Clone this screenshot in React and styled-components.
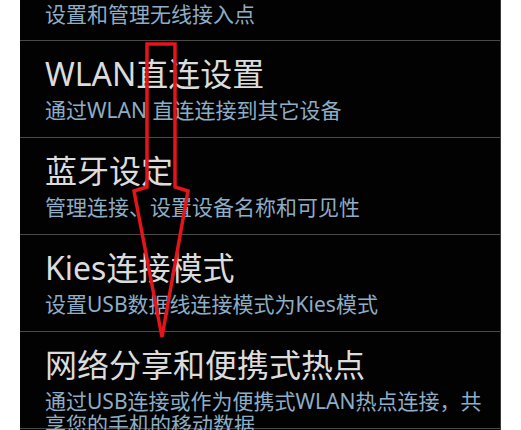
import React from "react"
import styled, { createGlobalStyle } from "styled-components"

const GlobalStyle = createGlobalStyle`
  html, body {
    margin: 0;
    padding: 0;
    background: #ffffff;
  }
  body {
    font-family: "Noto Sans", "Noto Sans CJK SC", sans-serif;
  }
`

const items = [
  { title: null, summary: "设置和管理无线接入点" },
  { title: "WLAN直连设置", summary: "通过WLAN 直连连接到其它设备" },
  { title: "蓝牙设定", summary: "管理连接、设置设备名称和可见性" },
  { title: "Kies连接模式", summary: "设置USB数据线连接模式为Kies模式" },
  {
    title: "网络分享和便携式热点",
    summary: "通过USB连接或作为便携式WLAN热点连接，共享您的手机的移动数据",
  },
]

// each character is its own box so mixed latin/CJK fonts don't grow the line
const SettingItem = ({ title, summary, cut }) => {
  return (
    <ItemWrapper $cut={cut}>
      {title && <ItemTitle>{title}</ItemTitle>}
      <ItemSummary>
        {summary.split("").map((ch, i) => (
          <Glyph key={i}>{ch}</Glyph>
        ))}
      </ItemSummary>
    </ItemWrapper>
  )
}

const DownArrow = () => (
  <ArrowLayer viewBox="0 0 521 430" width="521" height="430">
    <polygon
      points="147,44 175,44 175,187 188,191 162,337 134,191 147,187"
      fill="none"
      stroke="#e3141b"
      strokeWidth="3.5"
      strokeLinejoin="miter"
    />
  </ArrowLayer>
)

const App = () => {
  return (
    <Page>
      <GlobalStyle />
      <Panel>
        {items.map((item, i) => (
          <SettingItem key={i} cut={i === 0} {...item} />
        ))}
      </Panel>
      <DownArrow />
    </Page>
  )
}

export default App

const Page = styled.div`
  position: relative;
  width: 521px;
  height: 430px;
  overflow: hidden;
  background: #ffffff;
`

const Panel = styled.div`
  margin-left: 20px;
  width: 480px;
  height: 430px;
  background: #020202;
  border-right: 1px solid #3a3a3a;
  overflow: hidden;
`

const ItemWrapper = styled.div`
  box-sizing: border-box;
  flex-shrink: 0;
  height: ${(p) => (p.$cut ? "41px" : "97px")};
  padding: ${(p) => (p.$cut ? "3px" : "15px")} 18px 0 25px;
  border-bottom: 1px solid #4a4a4a;
  display: flex;
  flex-direction: column;
  gap: 7px;
`

const ItemTitle = styled.div`
  flex-shrink: 0;
  height: 36px;
  font-size: 32px;
  line-height: 36px;
  color: #dcdcdc;
  white-space: nowrap;
`

const ItemSummary = styled.div`
  display: flex;
  flex-wrap: wrap;
  font-size: 21px;
  color: #8eadc6;
`

const Glyph = styled.span`
  display: block;
  height: 23px;
  line-height: 23px;
  white-space: pre;
`

const ArrowLayer = styled.svg`
  position: absolute;
  left: 0;
  top: 0;
  pointer-events: none;
`
